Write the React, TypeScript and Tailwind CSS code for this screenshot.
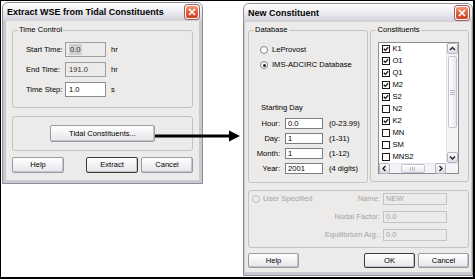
import React from "react";

type WindowProps = {
  title: string;
  className?: string;
  bodyClassName?: string;
  children: React.ReactNode;
};

const CloseBox = () => (
  <div className="w-[14px] h-[14px] rounded-[3px] border border-white bg-gradient-to-b from-[#f19a80] via-[#e0603c] to-[#c9401c] flex items-center justify-center shadow-[0_0_0_1px_#a85a5a]">
    <svg width="8" height="8" viewBox="0 0 8 8">
      <path d="M1 1L7 7M7 1L1 7" stroke="white" strokeWidth="1.7" />
    </svg>
  </div>
);

const Window = ({ title, className, bodyClassName, children }: WindowProps) => (
  <div className={`flex flex-col rounded-t-[6px] border border-[#8e8e9a] bg-[#c9c9d2] ${className}`}>
    <div className="h-[18px] shrink-0 flex items-center justify-between pl-[4px] pr-[3px] rounded-t-[5px] bg-gradient-to-b from-white via-[#ececf1] to-[#cfcfd8]">
      <span className="text-[9px] font-bold text-black leading-none">{title}</span>
      <CloseBox />
    </div>
    <div className={`flex-1 flex flex-col bg-[#ecebe9] ${bodyClassName}`}>{children}</div>
  </div>
);

const Button = ({ children, def, className }: { children: React.ReactNode; def?: boolean; className?: string }) => (
  <div
    className={`flex items-center justify-center rounded-[2px] bg-gradient-to-b from-white to-[#e6e6ea] text-black ${
      def ? "border border-[#3c3c3c]" : "border border-[#9a9aa4]"
    } shadow-[inset_-1px_-1px_0_#c4c4cc] ${className}`}
  >
    {children}
  </div>
);

const Radio = ({ on, off }: { on?: boolean; off?: boolean }) => (
  <span
    className={`w-[8px] h-[8px] rounded-full border flex items-center justify-center ${
      off ? "border-[#c2c2c2] bg-[#ecebe9]" : "border-[#80808a] bg-white"
    }`}
  >
    {on && <span className="w-[3px] h-[3px] rounded-full bg-[#202020]" />}
  </span>
);

const Check = ({ on }: { on: boolean }) => (
  <span className="w-[8px] h-[8px] border border-[#1a1a1a] bg-white flex items-center justify-center">
    {on && (
      <svg width="6" height="6" viewBox="0 0 6 6">
        <path d="M0.8 2.8L2.3 4.4L5.2 1.2" stroke="#111" strokeWidth="1.3" fill="none" />
      </svg>
    )}
  </span>
);

const ScrollBtn = ({ dir }: { dir: "up" | "down" | "left" | "right" }) => {
  const d = {
    up: "M2 6L4.5 3.5L7 6",
    down: "M2 3.5L4.5 6L7 3.5",
    left: "M5.5 2L3 4.5L5.5 7",
    right: "M3.5 2L6 4.5L3.5 7",
  }[dir];
  return (
    <div className="w-[11px] h-[11px] shrink-0 rounded-[2px] border border-[#b4b4c2] bg-gradient-to-b from-white to-[#dcdce4] flex items-center justify-center">
      <svg width="9" height="9" viewBox="0 0 9 9">
        <path d={d} stroke="#222" strokeWidth="1.4" fill="none" />
      </svg>
    </div>
  );
};

const constituents = [
  { name: "K1", on: true },
  { name: "O1", on: true },
  { name: "Q1", on: true },
  { name: "M2", on: true },
  { name: "S2", on: true },
  { name: "N2", on: false },
  { name: "K2", on: true },
  { name: "MN", on: false },
  { name: "SM", on: false },
  { name: "MNS2", on: false },
];

const timeRows = [
  { label: "Start Time:", value: "0.0", unit: "hr", ro: true, sel: true },
  { label: "End Time:", value: "191.0", unit: "hr", ro: true, sel: false },
  { label: "Time Step:", value: "1.0", unit: "s", ro: false, sel: false },
];

const dayRows = [
  { label: "Hour:", value: "0.0", hint: "(0-23.99)" },
  { label: "Day:", value: "1", hint: "(1-31)" },
  { label: "Month:", value: "1", hint: "(1-12)" },
  { label: "Year:", value: "2001", hint: "(4 digits)" },
];

const userRows = [
  { label: "Name:", value: "NEW" },
  { label: "Nodal Factor:", value: "0.0" },
  { label: "Equilibrium Arg.:", value: "0.0" },
];

export default function App() {
  return (
    <div className="relative w-[475px] h-[279px] bg-white border border-black border-r-2 border-b-2 flex items-start pl-[1px] pt-[1px] text-[7.6px] text-black font-['Liberation_Sans',Arial,sans-serif]">
      {/* Extract WSE dialog */}
      <Window title="Extract WSE from Tidal Constituents" className="w-[201px] h-[182px]" bodyClassName="px-[6px] pt-[4px] border-x-[3px] border-b-[3px] border-[#c9c9d2]">
        <fieldset className="border border-[#c3c3c3] rounded-[3px] pb-[10px]">
          <legend className="ml-[5px] px-[1px] leading-[10px]">Time Control</legend>
          <div className="flex flex-col gap-[5px] pt-[7px] pl-[13px]">
            {timeRows.map((r) => (
              <div key={r.label} className="flex items-center h-[15px]">
                <span className="w-[39px]">{r.label}</span>
                <div
                  className={`w-[41px] h-[15px] border flex items-center pl-[3px] ${
                    r.ro ? "bg-[#ecebe9] border-[#9c9ca4] text-[#333]" : "bg-white border-[#8c8c96]"
                  }`}
                >
                  <span className={r.sel ? "bg-[#cfcfcf] px-[1px]" : ""}>{r.value}</span>
                </div>
                <span className="ml-[5px]">{r.unit}</span>
              </div>
            ))}
          </div>
        </fieldset>
        <fieldset className="mt-[8px] border border-[#c3c3c3] rounded-[3px] py-[8px] flex justify-center">
          <Button className="w-[105px] h-[17px] mx-auto">Tidal Constituents...</Button>
        </fieldset>
        <div className="mt-[6px] flex items-center">
          <Button className="w-[52px] h-[16px]">Help</Button>
          <Button def className="ml-auto w-[52px] h-[16px]">Extract</Button>
          <Button className="ml-[3px] w-[52px] h-[16px]">Cancel</Button>
        </div>
      </Window>

      {/* New Constituent dialog */}
      <Window title="New Constituent" className="ml-[40px] mt-[1px] w-[230px] h-[273px]" bodyClassName="pl-[3px] pr-[2px] pt-[3px] border-l-[1px] border-r-[1px] border-b-[3px] border-[#c9c9d2]">
        <div className="flex items-start gap-[2px]">
          <fieldset className="w-[121px] h-[158px] border border-[#c3c3c3] rounded-[3px]">
            <legend className="ml-[5px] px-[1px] leading-[10px]">Database</legend>
            <div className="pt-[10px] pl-[11px] flex flex-col gap-[5px]">
              <div className="flex items-center gap-[4px] h-[10px]">
                <Radio />
                <span>LeProvost</span>
              </div>
              <div className="flex items-center gap-[4px] h-[10px]">
                <Radio on />
                <span>IMS-ADCIRC Database</span>
              </div>
            </div>
            <div className="mt-[33px] pl-[12px] h-[10px] leading-[10px]">Starting Day</div>
            <div className="mt-[5px] flex flex-col gap-[4px]">
              {dayRows.map((r) => (
                <div key={r.label} className="flex items-center h-[11px]">
                  <span className="w-[31px] text-right">{r.label}</span>
                  <div className="ml-[5px] w-[38px] h-[11px] bg-white border border-[#7c7c86] flex items-center pl-[2px]">{r.value}</div>
                  <span className="ml-[6px]">{r.hint}</span>
                </div>
              ))}
            </div>
          </fieldset>
          <fieldset className="w-[99px] h-[157px] border border-[#c3c3c3] rounded-[3px]">
            <legend className="ml-[5px] px-[1px] leading-[10px]">Constituents</legend>
            <div className="mt-[7px] ml-[7px] w-[81px] border border-[#8c8c96] bg-white flex flex-col">
              <div className="flex">
                <div className="flex-1 flex flex-col">
                  {constituents.map((c) => (
                    <div key={c.name} className="h-[12px] flex items-center gap-[2px] pl-[3px]">
                      <Check on={c.on} />
                      <span>{c.name}</span>
                    </div>
                  ))}
                </div>
                <div className="w-[12px] flex flex-col items-center bg-[#f4f4f6] border-l border-[#e4e4ea]">
                  <ScrollBtn dir="up" />
                  <div className="flex-1 w-full flex flex-col py-[1px]">
                    <div className="mt-[1px] h-[72px] mx-[1px] rounded-[2px] border border-[#c4c4d0] bg-gradient-to-r from-white to-[#e8e8ee] flex flex-col items-center justify-center gap-[1px]">
                      <span className="w-[5px] h-px bg-[#b8b8c4]" />
                      <span className="w-[5px] h-px bg-[#b8b8c4]" />
                      <span className="w-[5px] h-px bg-[#b8b8c4]" />
                    </div>
                  </div>
                  <ScrollBtn dir="down" />
                </div>
              </div>
              <div className="h-[10px] flex items-center bg-[#f4f4f6] border-t border-[#e4e4ea]">
                <ScrollBtn dir="left" />
                <div className="flex-1 flex justify-center">
                  <div className="w-[24px] h-[9px] rounded-[2px] border border-[#c4c4d0] bg-gradient-to-b from-white to-[#e8e8ee] flex items-center justify-center gap-[1px]">
                    <span className="w-px h-[4px] bg-[#b8b8c4]" />
                    <span className="w-px h-[4px] bg-[#b8b8c4]" />
                    <span className="w-px h-[4px] bg-[#b8b8c4]" />
                  </div>
                </div>
                <ScrollBtn dir="right" />
                <div className="w-[12px]" />
              </div>
            </div>
          </fieldset>
        </div>

        <div className="mt-[7px] h-[58px] border border-[#c3c3c3] rounded-[3px] flex items-start pt-[2px] text-[#a4a4a4]">
          <div className="h-[12px] flex items-center gap-[3px] pl-[3px]">
            <Radio off />
            <span>User Specified</span>
          </div>
          <div className="ml-auto mr-[21px] flex flex-col gap-[6px]">
            {userRows.map((r) => (
              <div key={r.label} className="flex items-center justify-end h-[12px]">
                <span>{r.label}</span>
                <div className="ml-[3px] w-[64px] h-[12px] border border-[#c4c4c4] bg-[#ecebe9] flex items-center pl-[2px]">{r.value}</div>
              </div>
            ))}
          </div>
        </div>

        <div className="mt-[5px] flex items-center">
          <Button className="w-[51px] h-[15px]">Help</Button>
          <Button def className="ml-auto w-[51px] h-[15px]">OK</Button>
          <Button className="ml-[3px] w-[51px] h-[15px]">Cancel</Button>
        </div>
      </Window>

      {/* arrow from the button to the second dialog */}
      <svg className="absolute left-[154px] top-[129px]" width="85" height="12" viewBox="0 0 85 12">
        <rect x="0" y="4.5" width="75" height="3" fill="#000" />
        <path d="M74 0.5L85 6L74 11.5Z" fill="#000" />
      </svg>
    </div>
  );
}
